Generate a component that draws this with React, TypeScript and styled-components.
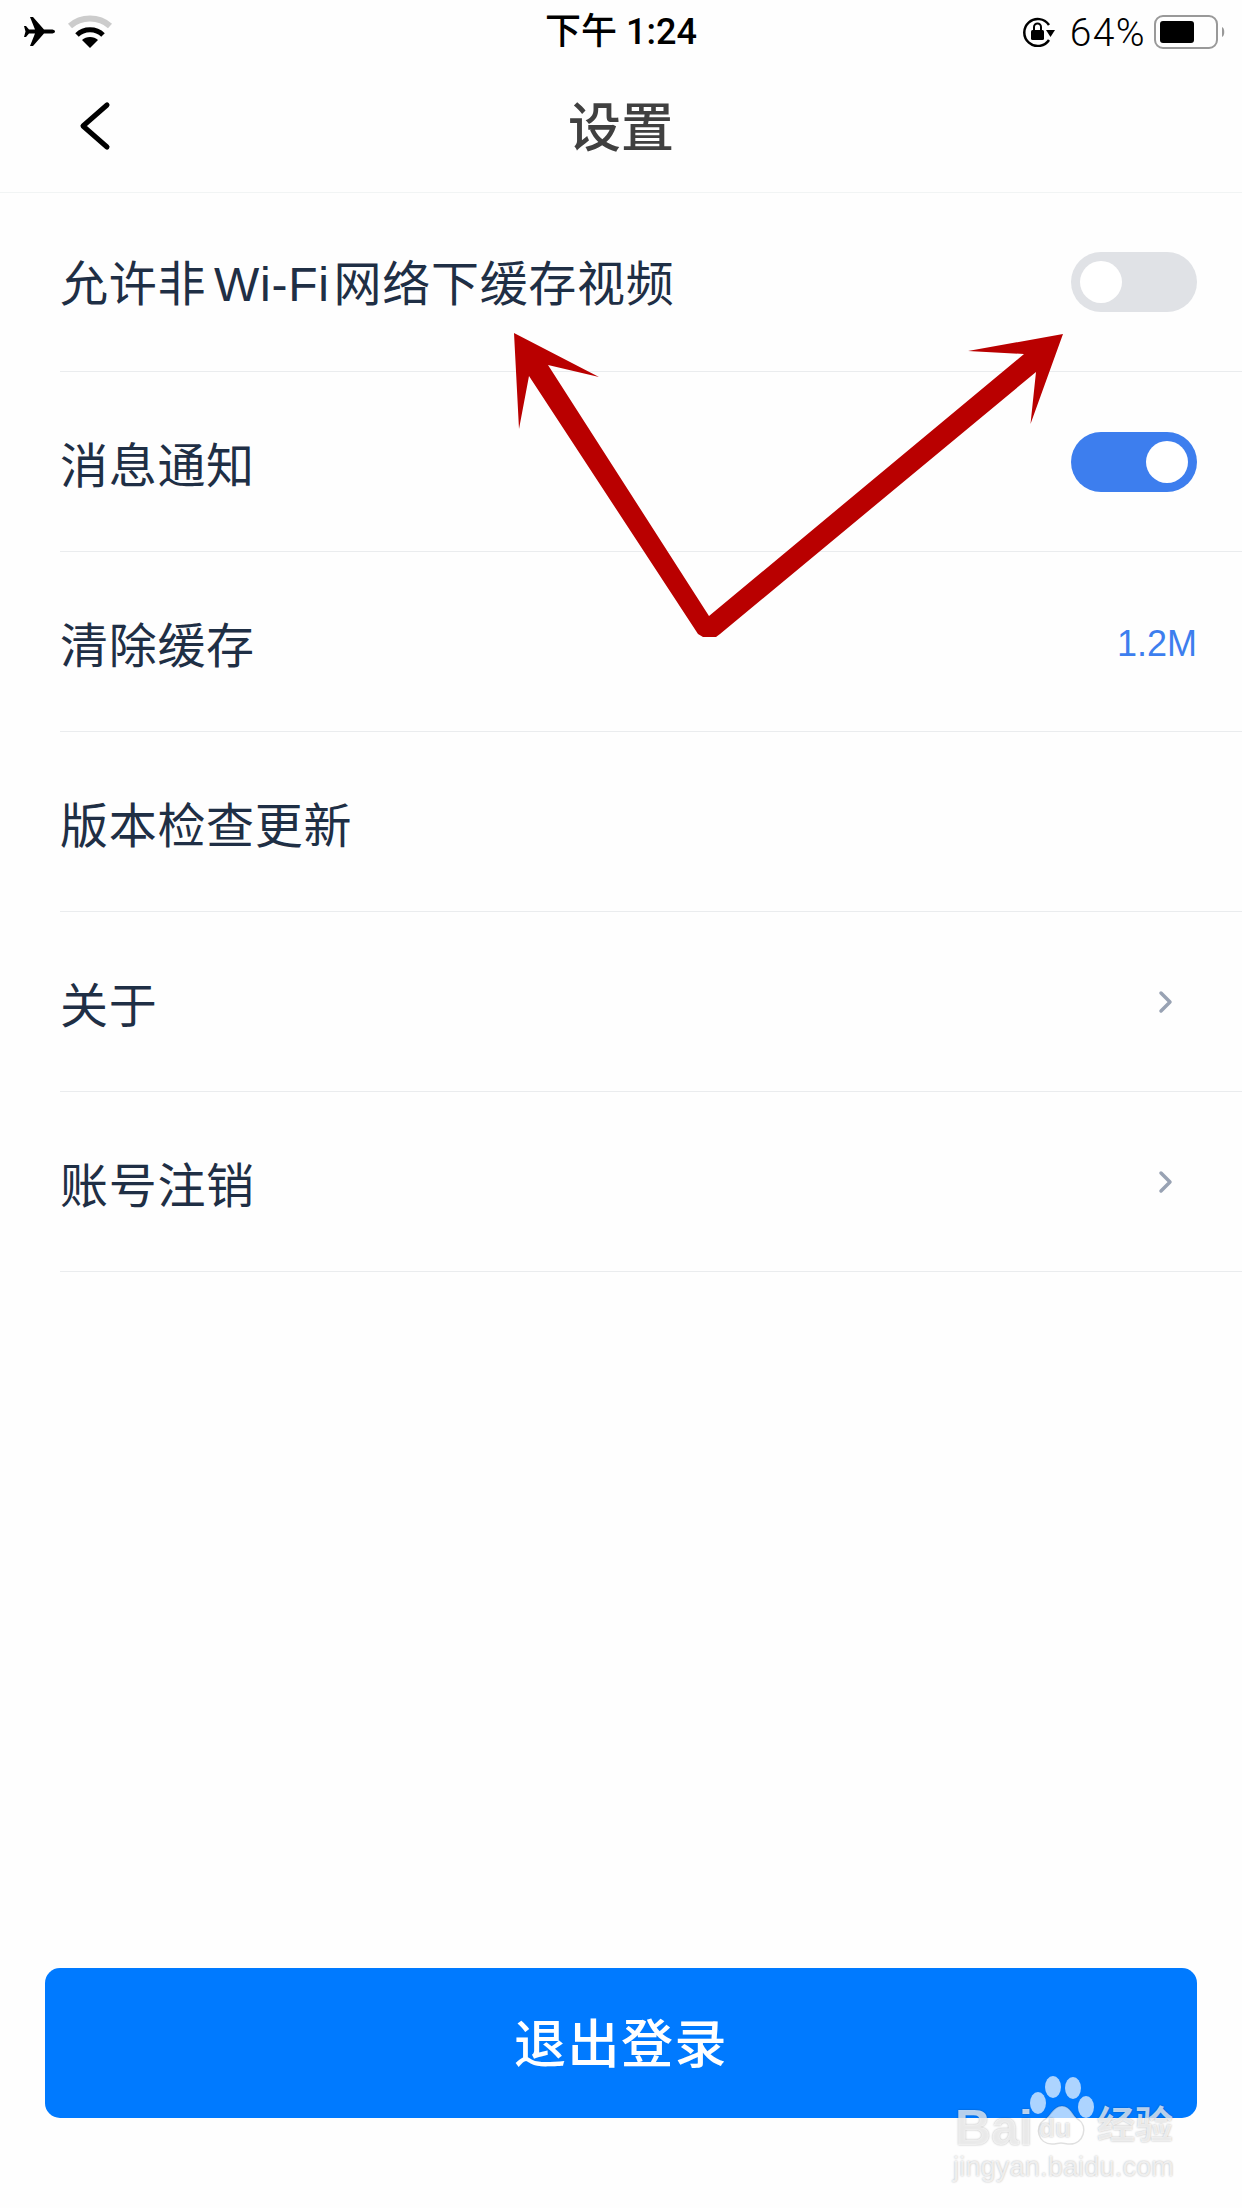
import React from "react";
import styled, { createGlobalStyle } from "styled-components";

const GlobalStyle = createGlobalStyle`
  html, body {
    margin: 0;
    padding: 0;
    background: #ffffff;
  }
  body {
    font-family: "Noto Sans CJK SC", "Liberation Sans", sans-serif;
  }
`;

const Page = styled.div`
  background: #fefefe;
  display: flex;
  flex-direction: column;
  height: 2208px;
  overflow: hidden;
  position: relative;
  width: 1242px;
`;

const StatusBar = styled.div`
  align-items: center;
  color: #000000;
  display: grid;
  grid-template-columns: 1fr auto 1fr;
  height: 60px;
  padding: 0 16px 0 24px;
`;

const StatusLeft = styled.div`
  align-items: center;
  display: flex;
  gap: 11px;
`;

const StatusRight = styled.div`
  align-items: center;
  display: flex;
  justify-content: flex-end;
`;

const Clock = styled.div`
  font-family: "Roboto", "Noto Sans CJK SC", sans-serif;
  font-size: 36px;
  font-weight: 500;
  line-height: 64px;
  margin-right: 8px;
  white-space: nowrap;
`;

const BatteryText = styled.span`
  font-family: "Roboto", sans-serif;
  font-size: 39px;
  font-weight: 300;
  letter-spacing: 1.4px;
  margin: 2px 8px 0 15px;
`;

const NavBar = styled.div`
  align-items: center;
  border-bottom: 1px solid #f1f4f4;
  display: flex;
  height: 132px;
  justify-content: center;
  position: relative;
`;

const BackButton = styled.svg`
  height: 50px;
  left: 78px;
  position: absolute;
  top: 41px;
  width: 34px;
`;

const Title = styled.h1`
  color: #404040;
  font-size: 53px;
  font-weight: 500;
  line-height: 1;
  margin: 0 0 4px;
`;

const List = styled.div`
  display: flex;
  flex-direction: column;
`;

const Row = styled.div`
  align-items: center;
  border-bottom: 1px solid #eaecee;
  box-sizing: border-box;
  display: flex;
  height: 180px;
  justify-content: space-between;
  margin-left: 60px;
  padding-right: 45px;

  &:first-child {
    height: 179px;
  }
`;

const Label = styled.span`
  color: #1f2f45;
  font-size: 48px;
  letter-spacing: 0.7px;
  line-height: 1;
  white-space: nowrap;
`;

const Latin = styled.span`
  font-family: "Liberation Sans", sans-serif;
  margin: 0 4px 0 8px;
`;

const Toggle = styled.div<{ $on?: boolean }>`
  align-items: center;
  background: ${(p) => (p.$on ? "#3d7eee" : "#e0e2e6")};
  border-radius: 30px;
  box-sizing: border-box;
  display: flex;
  height: 60px;
  justify-content: ${(p) => (p.$on ? "flex-end" : "flex-start")};
  padding: 0 9px;
  width: 126px;
`;

const Knob = styled.div`
  background: #ffffff;
  border-radius: 50%;
  height: 42px;
  width: 42px;
`;

const Value = styled.span`
  color: #3d7eee;
  font-family: "Liberation Sans", sans-serif;
  font-size: 36px;
  margin-top: 4px;
`;

const Chevron = styled.svg`
  height: 24px;
  margin-right: 23px;
  width: 16px;
`;

const Footer = styled.div`
  margin-top: auto;
  padding: 0 45px 90px;
`;

const LogoutButton = styled.button`
  background: #007aff;
  border: none;
  border-radius: 15px;
  color: #ffffff;
  display: block;
  font-family: "Noto Sans CJK SC", sans-serif;
  font-size: 52px;
  font-weight: 500;
  height: 150px;
  letter-spacing: 1.5px;
  padding: 0 0 6px;
  width: 100%;
`;

const Arrows = styled.svg`
  height: 310px;
  left: 510px;
  position: absolute;
  top: 330px;
  width: 560px;
`;

const Watermark = styled.div`
  height: 110px;
  left: 950px;
  position: absolute;
  top: 2075px;
  width: 232px;
`;

const PawIcon = styled.svg`
  height: 72px;
  left: 74px;
  position: absolute;
  top: 0;
  width: 72px;
`;

const MarkText = styled.span<{ $size: number; $left: number; $top: number }>`
  color: rgba(255, 255, 255, 0.72);
  font-family: "Liberation Sans", "Noto Sans CJK SC", sans-serif;
  font-size: ${(p) => p.$size}px;
  font-weight: 700;
  left: ${(p) => p.$left}px;
  line-height: 1;
  position: absolute;
  text-shadow: 0 0 2px rgba(0, 0, 0, 0.3);
  top: ${(p) => p.$top}px;
  white-space: nowrap;
`;

const MarkUrl = styled(MarkText)`
  font-weight: 400;
  letter-spacing: 0.2px;
`;

function RightChevron() {
  return (
    <Chevron viewBox="0 0 16 24">
      <path d="M3 3 L12 12 L3 21" fill="none" stroke="#98a2b3" strokeWidth="3.5" strokeLinecap="round" strokeLinejoin="round" />
    </Chevron>
  );
}

function App() {
  return (
    <Page>
      <GlobalStyle />
      <StatusBar>
        <StatusLeft>
          <svg width="32" height="30" viewBox="0 0 32 30">
            <path d="M31 14.5c0-1.5-2-2-4-2h-7L9 0H6l5 12.5H5L2 9H0l1.5 5.500L0 20h2l3-3.500h6L6 29h3l11-12.500h7c2 0 4-.5 4-2z" fill="#000" />
          </svg>
          <svg width="46" height="34" viewBox="0 0 46 34">
            <path d="M3 11 C14 1 32 1 43 11" fill="none" stroke="#cccccc" strokeWidth="6" />
            <path d="M10 20 C17 13 29 13 36 20" fill="none" stroke="#000" strokeWidth="5" />
            <path d="M15 25 C19 21 27 21 31 25 L23 33 Z" fill="#000" />
          </svg>
        </StatusLeft>
        <Clock>下午 1:24</Clock>
        <StatusRight>
          <svg width="33" height="30" viewBox="0 0 33 30">
            <path d="M27 8 A13.500 13.500 0 1 0 27 23" fill="none" stroke="#000" strokeWidth="2.500" />
            <path d="M24 13 H33 L28.500 20 Z" fill="#000" />
            <rect x="9" y="13" width="13" height="10" rx="1.500" fill="#000" />
            <path d="M12 13 V10 a3.500 3.500 0 0 1 7 0 V13" fill="none" stroke="#000" strokeWidth="2" />
          </svg>
          <BatteryText>64%</BatteryText>
          <svg width="72" height="34" viewBox="0 0 72 34">
            <rect x="1" y="1" width="62" height="32" rx="8" fill="none" stroke="#999999" strokeWidth="2" />
            <rect x="6" y="6" width="34" height="22" rx="3" fill="#000" />
            <path d="M68 12 C71 13 71 21 68 22 Z" fill="#999999" />
          </svg>
        </StatusRight>
      </StatusBar>
      <NavBar>
        <BackButton viewBox="0 0 34 50">
          <path d="M29 4 L5 25 L29 46" fill="none" stroke="#000" strokeWidth="5" strokeLinecap="round" strokeLinejoin="round" />
        </BackButton>
        <Title>设置</Title>
      </NavBar>
      <List>
        <Row>
          <Label>
            允许非<Latin>Wi-Fi</Latin>网络下缓存视频
          </Label>
          <Toggle>
            <Knob />
          </Toggle>
        </Row>
        <Row>
          <Label>消息通知</Label>
          <Toggle $on>
            <Knob />
          </Toggle>
        </Row>
        <Row>
          <Label>清除缓存</Label>
          <Value>1.2M</Value>
        </Row>
        <Row>
          <Label>版本检查更新</Label>
        </Row>
        <Row>
          <Label>关于</Label>
          <RightChevron />
        </Row>
        <Row>
          <Label>账号注销</Label>
          <RightChevron />
        </Row>
      </List>
      <Footer>
        <LogoutButton>退出登录</LogoutButton>
      </Footer>
      <Arrows viewBox="510 330 560 310">
        <polygon
          points="514,333 599,377 548,365 709,616 1024,354 968,351 1063,334 1030.500,424 1036,372 720,634 716,637 703,637 698,634 529,376 519,429"
          fill="#b90000"
        />
      </Arrows>
      <Watermark>
        <PawIcon viewBox="0 0 72 72">
          <g fill="rgba(255,255,255,0.68)">
            <ellipse cx="29" cy="12" rx="8" ry="11" />
            <ellipse cx="49" cy="13" rx="8" ry="11" />
            <ellipse cx="14" cy="28" rx="8" ry="11" />
            <ellipse cx="62" cy="32" rx="8" ry="11" />
            <path
              d="M38 31 C47 31 48 41 55 45 C64 51 60 69 46 69 C42 69 40 68 37 68 C34 68 32 69 28 69 C14 69 10 52 20 45 C27 41 29 31 38 31 Z"
              stroke="rgba(0,0,0,0.12)"
              strokeWidth="1.500"
            />
          </g>
        </PawIcon>
        <MarkText $size={50} $left={5} $top={28}>
          Bai
        </MarkText>
        <MarkText $size={26} $left={89} $top={40}>
          du
        </MarkText>
        <MarkText $size={38} $left={147} $top={31}>
          经验
        </MarkText>
        <MarkUrl $size={27} $left={3} $top={79}>
          jingyan.baidu.com
        </MarkUrl>
      </Watermark>
    </Page>
  );
}

export default App;
